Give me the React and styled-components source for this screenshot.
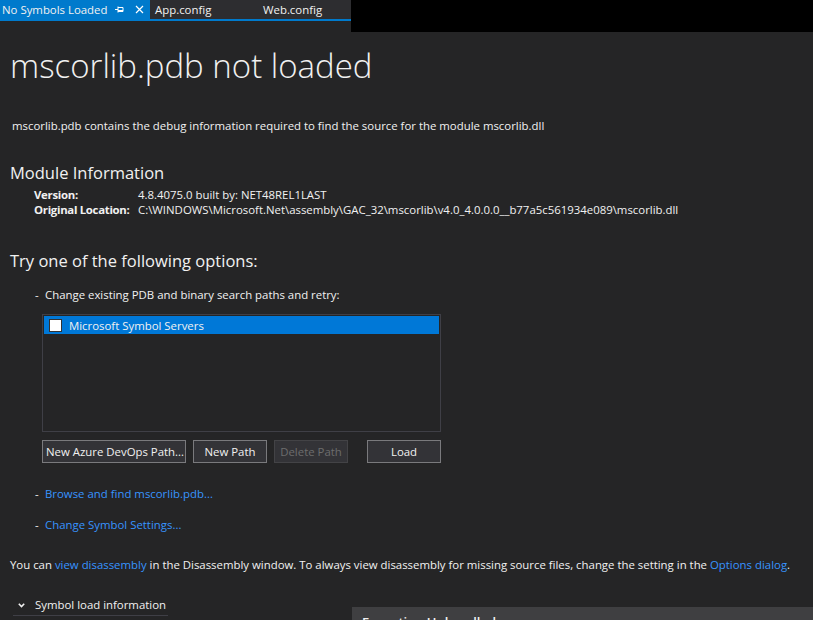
import React from 'react';
import styled, { createGlobalStyle } from 'styled-components';

const GlobalStyle = createGlobalStyle`
  html, body {
    margin: 0;
    padding: 0;
    background: #252526;
    overflow: hidden;
  }
  body {
    font-family: "Open Sans", "Noto Sans", sans-serif;
    color: #f1f1f1;
  }
`;

function PinIcon() {
  return (
    <svg width="9" height="9" viewBox="0 0 9 9">
      <path d="M0 4.5h3M3 1.5v6M3 2.5h5v4H3M3 5.5h5" stroke="#fff" strokeWidth="1" fill="none" />
    </svg>
  );
}

function CloseIcon() {
  return (
    <svg width="9" height="9" viewBox="0 0 9 9">
      <path d="M1 1l7 7M8 1L1 8" stroke="#fff" strokeWidth="1.2" fill="none" />
    </svg>
  );
}

function Chevron() {
  return (
    <svg width="7" height="5" viewBox="0 0 7 5" style={{ flexShrink: 0 }}>
      <path d="M0.8 0.8l2.7 2.7L6.2 0.8" stroke="#f1f1f1" strokeWidth="1.6" fill="none" />
    </svg>
  );
}

export default function App() {
  return (
    <>
      <GlobalStyle />
      <TopBar>
        <TabStrip>
          <Tabs>
            <Tab active>
              No Symbols Loaded
              <TabIcons>
                <PinIcon />
                <CloseIcon />
              </TabIcons>
            </Tab>
            <Tab width={108}>App.config</Tab>
            <Tab>Web.config</Tab>
          </Tabs>
        </TabStrip>
        <Filler />
      </TopBar>

      <Page>
        <Title>mscorlib.pdb not loaded</Title>
        <Lead>mscorlib.pdb contains the debug information required to find the source for the module mscorlib.dll</Lead>

        <SectionTitle>Module Information</SectionTitle>
        <InfoGrid>
          <Label>Version:</Label>
          <Value>4.8.4075.0 built by: NET48REL1LAST</Value>
          <Label>Original Location:</Label>
          <Value>C:\WINDOWS\Microsoft.Net\assembly\GAC_32\mscorlib\v4.0_4.0.0.0__b77a5c561934e089\mscorlib.dll</Value>
        </InfoGrid>

        <SectionTitle top={32}>Try one of the following options:</SectionTitle>

        <Option top={14}>
          <Dash>-</Dash>
          <span>Change existing PDB and binary search paths and retry:</span>
        </Option>

        <PathBlock>
          <PathList>
            <PathRow selected>
              <Check />
              Microsoft Symbol Servers
            </PathRow>
          </PathList>
          <ButtonRow>
            <Button w={144}>New Azure DevOps Path...</Button>
            <Button>New Path</Button>
            <Button disabled>Delete Path</Button>
            <Button push>Load</Button>
          </ButtonRow>
        </PathBlock>

        <Option top={23}>
          <Dash>-</Dash>
          <Link>Browse and find mscorlib.pdb...</Link>
        </Option>
        <Option top={15}>
          <Dash>-</Dash>
          <Link>Change Symbol Settings...</Link>
        </Option>

        <Footnote>
          You can <Link>view disassembly</Link> in the Disassembly window. To always view disassembly for missing source files, change the setting in the <Link>Options dialog</Link>.
        </Footnote>

        <Expander>
          <Chevron />
          <span>Symbol load information</span>
        </Expander>
      </Page>

      <ExceptionPopup>Exception Unhandled</ExceptionPopup>
    </>
  );
}

const TopBar = styled.div`
  display: flex;
  height: 32px;
`;

const TabStrip = styled.div`
  width: 351px;
  background: #252526;
`;

const Tabs = styled.div`
  display: flex;
  height: 19px;
  background: #2d2d30;
  border-bottom: 2px solid #007acc;
`;

const Tab = styled.div`
  display: flex;
  align-items: center;
  box-sizing: border-box;
  height: 19px;
  padding: 0 2px 0 ${p => (p.active ? '2px' : '5px')};
  width: ${p => (p.active ? '150px' : p.width ? `${p.width}px` : 'auto')};
  background: ${p => (p.active ? '#007acc' : 'transparent')};
  color: #f1f1f1;
  font-size: 11.4px;
  white-space: nowrap;
`;

const TabIcons = styled.span`
  display: flex;
  align-items: center;
  gap: 11px;
  margin-left: auto;
  margin-right: 4px;
`;

const Filler = styled.div`
  flex: 1;
  background: #000;
`;

const Page = styled.div`
  padding: 0 10px;
`;

const Title = styled.h1`
  margin: 14px 0 0;
  font-size: 33px;
  font-weight: 300;
  line-height: 40px;
  color: #f1f1f1;
`;

const Lead = styled.p`
  margin: 32px 0 0 2px;
  font-size: 11.4px;
  line-height: 16px;
`;

const SectionTitle = styled.h2`
  margin: ${p => p.top || 27}px 0 0;
  font-size: 16.5px;
  font-weight: 400;
  line-height: 24px;
`;

const InfoGrid = styled.div`
  display: grid;
  grid-template-columns: 104px auto;
  margin: 2px 0 0 24px;
  font-size: 11.4px;
  line-height: 15px;
  white-space: nowrap;
`;

const Label = styled.span`
  font-weight: 700;
  letter-spacing: -0.3px;
`;

const Value = styled.span``;

const Option = styled.div`
  display: flex;
  margin: ${p => p.top}px 0 0 25px;
  font-size: 11.4px;
  line-height: 16px;
`;

const Dash = styled.span`
  width: 10px;
`;

const PathBlock = styled.div`
  margin: 11px 0 0 32px;
  width: 399px;
`;

const PathList = styled.div`
  box-sizing: border-box;
  height: 118px;
  border: 1px solid #3f3f46;
  padding: 1px;
`;

const PathRow = styled.div`
  display: flex;
  align-items: center;
  gap: 7px;
  height: 18px;
  padding-left: 5px;
  background: ${p => (p.selected ? '#0078d7' : 'transparent')};
  font-size: 11.4px;
`;

const Check = styled.span`
  box-sizing: border-box;
  width: 13px;
  height: 13px;
  background: #fff;
  border: 1px solid #333;
`;

const ButtonRow = styled.div`
  display: flex;
  gap: 7px;
  margin-top: 8px;
`;

const Button = styled.button`
  box-sizing: border-box;
  height: 23px;
  padding: 0 3px;
  width: ${p => p.w || 74}px;
  margin-left: ${p => (p.push ? '12px' : '0')};
  background: #333337;
  border: 1px solid ${p => (p.disabled ? '#434346' : '#7a7a7d')};
  color: ${p => (p.disabled ? '#6d6d6d' : '#f1f1f1')};
  font-family: inherit;
  font-size: 11.4px;
  white-space: nowrap;
`;

const Link = styled.span`
  color: #3794ff;
  cursor: pointer;
`;

const Footnote = styled.p`
  margin: 24px 0 0;
  font-size: 11.4px;
  line-height: 16px;
  white-space: nowrap;
`;

const Expander = styled.div`
  display: flex;
  align-items: center;
  gap: 10px;
  width: fit-content;
  margin: 24px 0 0 3px;
  padding: 0 2px 2px 5px;
  border-bottom: 1px solid #3f3f46;
  font-size: 11.4px;
  line-height: 16px;
  white-space: nowrap;
`;

const ExceptionPopup = styled.div`
  position: absolute;
  left: 352px;
  top: 607px;
  width: 461px;
  height: 40px;
  padding: 6px 10px;
  box-sizing: border-box;
  background: #3f3f41;
  color: #f1f1f1;
  font-size: 13px;
  font-weight: 600;
`;
